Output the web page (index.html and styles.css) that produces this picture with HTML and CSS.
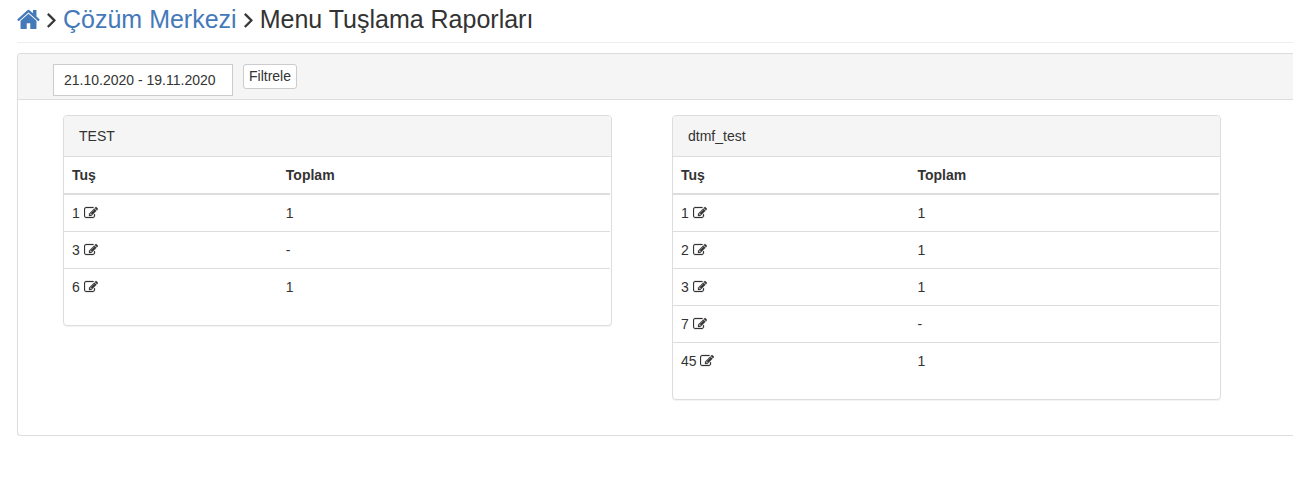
FILE: index.html
```html
<!DOCTYPE html>
<html lang="tr">
<head>
<meta charset="utf-8">
<title>Menu Tuşlama Raporları</title>
<link rel="stylesheet" href="styles.css">
</head>
<body>
<svg class="sprite" aria-hidden="true">
  <symbol id="home" viewBox="64 64 1664 1664" preserveAspectRatio="none"><path d="M1472 992v480q0 26-19 45t-45 19h-384v-384h-256v384h-384q-26 0-45-19t-19-45v-480q0-1 .5-3t.5-3l575-474 575 474q1 2 1 6zm223-69l-62 74q-8 9-21 11h-3q-13 0-21-7l-692-577-692 577q-12 8-24 7-13-2-21-11l-62-74q-8-10-7-23.5t11-21.5l719-599q32-26 76-26t76 26l244 204v-195q0-14 9-23t23-9h192q14 0 23 9t9 23v408l219 182q10 8 11 21.5t-7 23.5z"/></symbol>
  <symbol id="angle" viewBox="560 0 640 1792"><path d="M1171 960q0 13-10 23l-466 466q-10 10-23 10t-23-10l-50-50q-10-10-10-23t10-23l393-393-393-393q-10-10-10-23t10-23l50-50q10-10 23-10t23 10l466 466q10 10 10 23z"/></symbol>
  <symbol id="edit" viewBox="0 0 1792 1792"><path d="M888 1184l116-116-152-152-116 116v56h96v96h56zm440-720q-16-16-33 1l-350 350q-17 17-1 33t33-1l350-350q17-17 1-33zm80 594v190q0 119-84.5 203.5t-203.5 84.5h-832q-119 0-203.5-84.5t-84.5-203.5v-832q0-119 84.5-203.5t203.5-84.5h832q63 0 117 25 15 7 18 23 3 17-9 29l-49 49q-14 14-32 8-23-6-45-6h-832q-66 0-113 47t-47 113v832q0 66 47 113t113 47h832q66 0 113-47t47-113v-126q0-13 9-22l64-64q15-15 35-7t20 29zm-96-738l288 288-672 672h-288v-288zm444 132l-92 92-288-288 92-92q28-28 68-28t68 28l152 152q28 28 28 68t-28 68z"/></symbol>
</svg>
<main class="page">
  <h1 class="title">
    <a href="#" aria-label="Ana sayfa"><svg class="icon-home"><use href="#home"/></svg></a>
    <svg class="icon-angle"><use href="#angle"/></svg>
    <a href="#">Çözüm Merkezi</a>
    <svg class="icon-angle"><use href="#angle"/></svg>
    <span>Menu Tuşlama Raporları</span>
  </h1>
  <section class="panel report">
    <form class="filter">
      <input class="range" type="text" aria-label="Tarih aralığı" value="21.10.2020 - 19.11.2020">
      <button class="submit" type="button">Filtrele</button>
    </form>
    <div class="menus">
      <section class="panel">
        <h2 class="heading">TEST</h2>
        <table class="keys">
          <thead><tr><th>Tuş</th><th>Toplam</th></tr></thead>
          <tbody>
            <tr><td>1 <svg class="icon-edit"><use href="#edit"/></svg></td><td>1</td></tr>
            <tr><td>3 <svg class="icon-edit"><use href="#edit"/></svg></td><td>-</td></tr>
            <tr><td>6 <svg class="icon-edit"><use href="#edit"/></svg></td><td>1</td></tr>
          </tbody>
        </table>
      </section>
      <section class="panel">
        <h2 class="heading">dtmf_test</h2>
        <table class="keys">
          <thead><tr><th>Tuş</th><th>Toplam</th></tr></thead>
          <tbody>
            <tr><td>1 <svg class="icon-edit"><use href="#edit"/></svg></td><td>1</td></tr>
            <tr><td>2 <svg class="icon-edit"><use href="#edit"/></svg></td><td>1</td></tr>
            <tr><td>3 <svg class="icon-edit"><use href="#edit"/></svg></td><td>1</td></tr>
            <tr><td>7 <svg class="icon-edit"><use href="#edit"/></svg></td><td>-</td></tr>
            <tr><td>45 <svg class="icon-edit"><use href="#edit"/></svg></td><td>1</td></tr>
          </tbody>
        </table>
      </section>
    </div>
  </section>
</main>
</body>
</html>
```
FILE: styles.css
```css
* { box-sizing: border-box; }
body {
  margin: 0;
  background: #fff;
  color: #333;
  font: 14px/20px "Liberation Sans", Arial, sans-serif;
}
.sprite { display: none; }
svg { fill: currentColor; }
.page { padding-left: 17px; }
.title {
  display: flex;
  align-items: center;
  gap: 7px;
  margin: 0 0 10px;
  padding: 4px 0 8px;
  border-bottom: 1px solid #eee;
  font-size: 25px;
  line-height: 30px;
  font-weight: 400;
}
.title a { color: #4479ba; text-decoration: none; }
.icon-home { display: block; width: 23px; height: 25px; }
.icon-angle {
  width: 9px;
  height: 25px;
  stroke: currentColor;
  stroke-width: 36px;
}
.panel {
  border: 1px solid #ddd;
  border-radius: 4px;
  background: #fff;
  box-shadow: 0 1px 1px rgba(0, 0, 0, .05);
}
.report {
  border-right: 0;
  border-radius: 4px 0 0 4px;
}
.filter {
  display: flex;
  align-items: flex-start;
  gap: 10px;
  padding: 10px 35px 3px;
  border-bottom: 1px solid #ddd;
  border-top-left-radius: 3px;
  background: #f5f5f5;
}
.range {
  width: 180px;
  height: 32px;
  padding: 0 10px;
  border: 1px solid #ccc;
  background: #fff;
  color: #333;
  font: inherit;
}
.submit {
  height: 25px;
  padding: 0 5px 2px;
  border: 1px solid #ccc;
  border-radius: 3px;
  background: #fff;
  color: #333;
  font: inherit;
}
.menus {
  display: grid;
  grid-template-columns: 1fr 1fr;
  align-items: start;
  gap: 60px;
  padding: 15px 72px 35px 45px;
}
.heading {
  margin: 0;
  padding: 10px 15px;
  border-bottom: 1px solid #ddd;
  border-radius: 3px 3px 0 0;
  background: #f5f5f5;
  font-size: 14px;
  font-weight: 400;
}
.keys {
  width: calc(100% - 1px);
  margin-bottom: 20px;
  border-collapse: collapse;
}
.keys th, .keys td {
  padding: 8px;
  text-align: left;
  line-height: 20px;
}
.keys th { border-bottom: 2px solid #ddd; }
.keys td { border-top: 1px solid #ddd; }
.icon-edit {
  width: 14px;
  height: 14px;
  vertical-align: -2px;
  stroke: currentColor;
  stroke-width: 30px;
}
```
